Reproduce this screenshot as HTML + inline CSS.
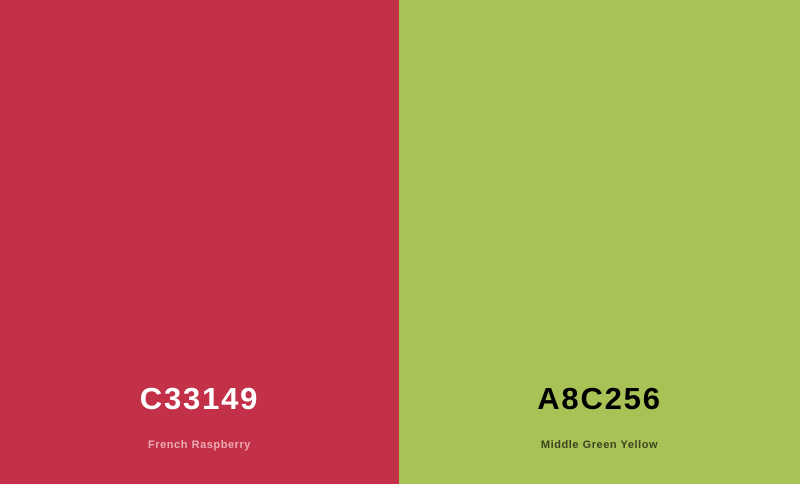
<html><head><style>
body{margin:0;width:800px;height:484px;overflow:hidden;font-family:"Liberation Sans",sans-serif;}
.p{position:absolute;top:0;height:484px;}
.h{position:absolute;top:380px;width:100%;text-align:center;font-size:31px;font-weight:bold;letter-spacing:1.8px;line-height:38px}
.n{position:absolute;top:437px;width:100%;text-align:center;font-size:11px;font-weight:bold;line-height:16px;letter-spacing:0.55px}
</style></head><body>
<div class="p" style="left:0;width:399px;background:#c33149"><div class="h" style="color:#fff">C33149</div><div class="n" style="color:#eba9b3">French Raspberry</div></div>
<div class="p" style="left:399px;width:401px;background:#a8c256"><div class="h" style="color:#000">A8C256</div><div class="n" style="color:#3a4420">Middle Green Yellow</div></div>
</body></html>
